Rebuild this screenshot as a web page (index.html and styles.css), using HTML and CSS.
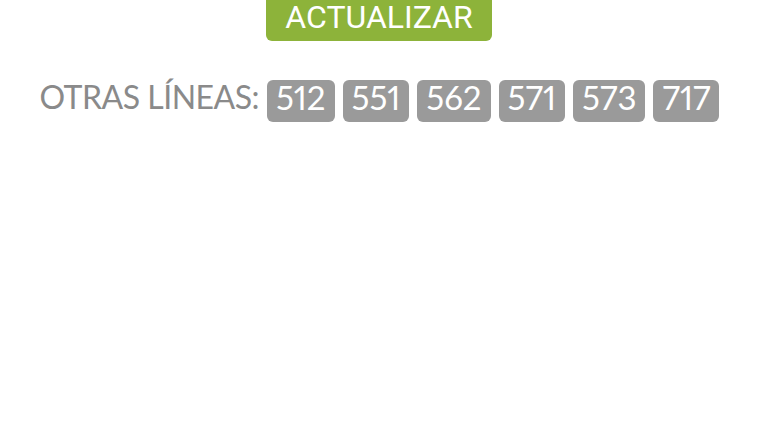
FILE: index.html
```html
<!DOCTYPE html>
<html lang="es">
<head>
<meta charset="utf-8">
<title>Líneas</title>
<link rel="stylesheet" href="styles.css">
</head>
<body>
<div class="top">
  <a class="btn-update">ACTUALIZAR</a>
</div>
<div class="lines">
  <span class="label">OTRAS LÍNEAS:</span>
  <span class="badge">512</span>
  <span class="badge">551</span>
  <span class="badge">562</span>
  <span class="badge">571</span>
  <span class="badge">573</span>
  <span class="badge">717</span>
</div>
</body>
</html>
```
FILE: styles.css
```css
html, body {
  margin: 0;
  padding: 0;
  background: #ffffff;
}
body {
  width: 757px;
  height: 426px;
  overflow: hidden;
}
.top {
  display: flex;
  justify-content: center;
}
.btn-update {
  display: block;
  box-sizing: border-box;
  height: 41px;
  padding: 0 19px;
  background: #8db33a;
  color: #ffffff;
  font-family: Roboto, "Liberation Sans", sans-serif;
  font-size: 32px;
  line-height: 34px;
  border-radius: 0 0 6px 6px;
  margin-left: 1px;
}
.lines {
  margin-top: 39px;
  display: flex;
  justify-content: center;
  align-items: flex-start;
  gap: 8px;
  font-family: Lato, "Open Sans", sans-serif;
  font-size: 32px;
  padding-left: 2px;
}
.label {
  color: #8a8a8a;
  line-height: 32px;
  padding-top: 1px;
  letter-spacing: -0.5px;
}
.badge {
  box-sizing: border-box;
  height: 42px;
  padding: 1px 9px 9px;
  font-size: 33px;
  line-height: 32px;
  background: #9a9a9a;
  color: #ffffff;
  border-radius: 6px;
  font-variant-numeric: proportional-nums;
}
```
